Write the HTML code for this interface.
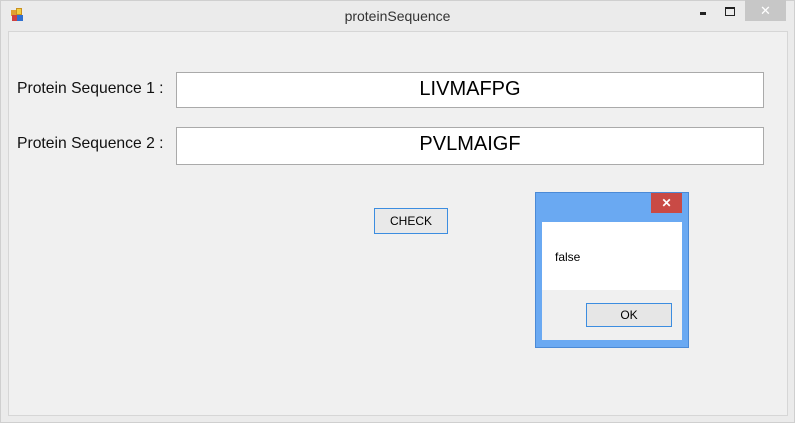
<!DOCTYPE html>
<html><head><style>
body{margin:0;width:795px;height:423px;background:#f0f0f0;position:relative;overflow:hidden;font-family:"Liberation Sans",sans-serif;}
.a{position:absolute;box-sizing:border-box}
</style></head><body>
<div class="a" style="left:0;top:0;width:795px;height:423px;background:#ebebeb;border:1px solid #cfcfcf"></div>
<div class="a" style="left:8px;top:31px;width:780px;height:385px;background:#f0f0f0;border:1px solid #d6d6d6"></div>
<div class="a" style="left:11px;top:10px;width:6px;height:6px;background:#e0a030"></div>
<div class="a" style="left:16px;top:8px;width:6px;height:7px;background:#f2cf40;border:1px solid #c99020"></div>
<div class="a" style="left:12px;top:15px;width:5px;height:6px;background:#d04040"></div>
<div class="a" style="left:17px;top:15px;width:6px;height:6px;background:#3070d0"></div>
<div class="a" style="left:0;top:8px;width:795px;text-align:center;font-size:14px;color:#333">proteinSequence</div>
<div class="a" style="left:700px;top:12px;width:6px;height:3px;background:#222"></div>
<div class="a" style="left:725px;top:7px;width:10px;height:9px;border:1px solid #222;border-top-width:2px"></div>
<div class="a" style="left:745px;top:0;width:41px;height:21px;background:#c7c7c7;color:#fff;text-align:center;font-size:13px;line-height:21px">✕</div>
<div class="a" style="left:17px;top:80px;font-size:15.7px;color:#111">Protein Sequence 1 :</div>
<div class="a" style="left:17px;top:135px;font-size:15.7px;color:#111">Protein Sequence 2 :</div>
<div class="a" style="left:176px;top:72px;width:588px;height:36px;background:#fff;border:1px solid #aaa;text-align:center;font-size:20px;line-height:32px;color:#000">LIVMAFPG</div>
<div class="a" style="left:176px;top:127px;width:588px;height:38px;background:#fff;border:1px solid #aaa;text-align:center;font-size:20px;line-height:32px;color:#000">PVLMAIGF</div>
<div class="a" style="left:374px;top:208px;width:74px;height:26px;background:#e9e9e9;border:1px solid #3c8de0;text-align:center;font-size:12px;line-height:24px">CHECK</div>
<div class="a" style="left:535px;top:192px;width:154px;height:156px;background:#6aa9f2;border:1px solid #4b8ad6"></div>
<div class="a" style="left:651px;top:193px;width:31px;height:20px;background:#c94a45;color:#fff;text-align:center;font-size:12px;line-height:20px;font-weight:bold">✕</div>
<div class="a" style="left:542px;top:222px;width:140px;height:118px;background:#f0f0f0"></div>
<div class="a" style="left:542px;top:222px;width:140px;height:68px;background:#fff"></div>
<div class="a" style="left:555px;top:250px;font-size:12px">false</div>
<div class="a" style="left:586px;top:303px;width:86px;height:24px;background:#e6e6e6;border:1px solid #3c8de0;text-align:center;font-size:12px;line-height:22px">OK</div>
</body></html>
